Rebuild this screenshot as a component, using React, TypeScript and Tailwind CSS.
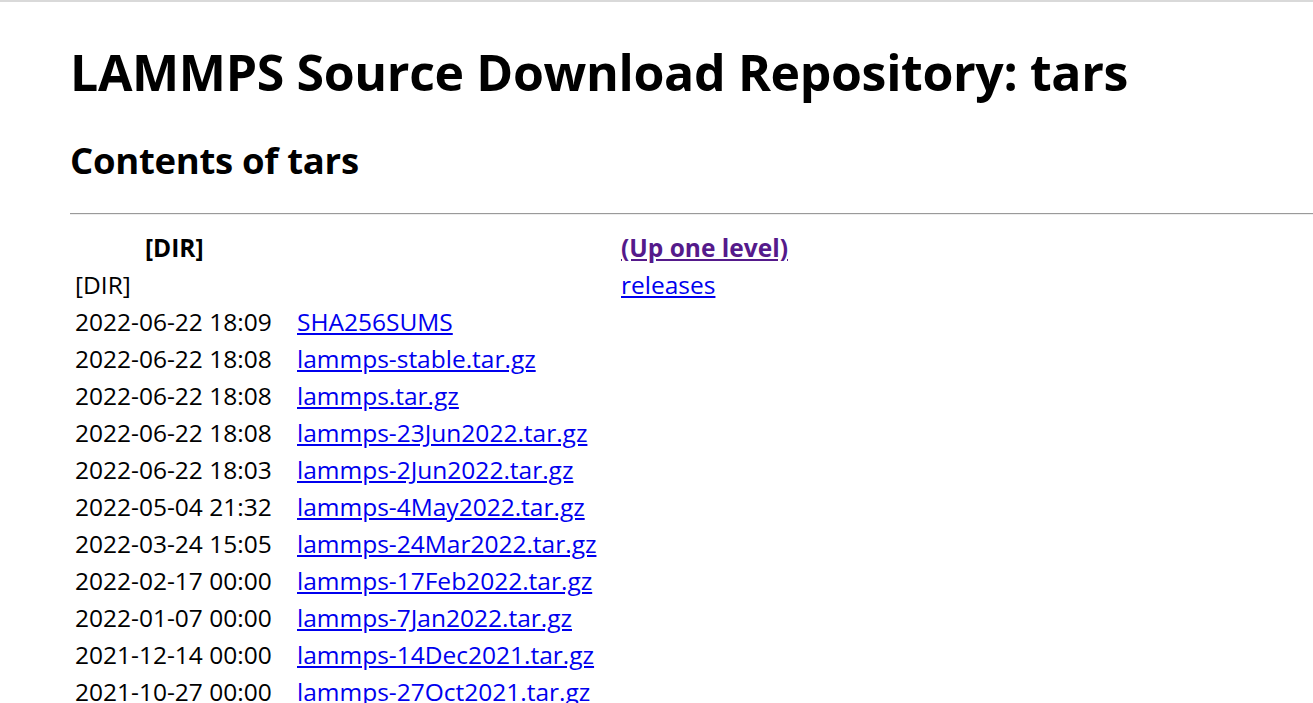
import React from "react";

const rows: [string, string][] = [
  ["2022-06-22 18:09", "SHA256SUMS"],
  ["2022-06-22 18:08", "lammps-stable.tar.gz"],
  ["2022-06-22 18:08", "lammps.tar.gz"],
  ["2022-06-22 18:08", "lammps-23Jun2022.tar.gz"],
  ["2022-06-22 18:03", "lammps-2Jun2022.tar.gz"],
  ["2022-05-04 21:32", "lammps-4May2022.tar.gz"],
  ["2022-03-24 15:05", "lammps-24Mar2022.tar.gz"],
  ["2022-02-17 00:00", "lammps-17Feb2022.tar.gz"],
  ["2022-01-07 00:00", "lammps-7Jan2022.tar.gz"],
  ["2021-12-14 00:00", "lammps-14Dec2021.tar.gz"],
  ["2021-10-27 00:00", "lammps-27Oct2021.tar.gz"],
];

export default function App() {
  return (
    <div
      className="h-[703px] overflow-hidden bg-white text-black border-t-2 border-[#d9d9d9]"
      style={{ fontFamily: '"Open Sans", "Noto Sans", sans-serif' }}
    >
      <div className="pl-[70px]">
        <h1 className="text-[50px] font-bold leading-[60px] pt-[40px] tracking-[-0.35px] whitespace-nowrap">
          LAMMPS Source Download Repository: tars
        </h1>
        <h2 className="text-[36.5px] font-bold leading-[44px] mt-[36px] tracking-[-0.3px]">
          Contents of tars
        </h2>
        <div className="mt-[31px] border-t border-[#9a9a9a] border-b border-b-[#eeeeee]" />
        <div className="grid grid-cols-[227px_324px_1fr] text-[24.5px] leading-[37px] mt-[14px]">
          <div className="h-[37px] pl-[75px] font-bold">[DIR]</div>
          <div className="h-[37px]" />
          <div className="h-[37px] font-bold">
            <a href="#" className="text-[#551a8b] underline">(Up one level)</a>
          </div>
          <div className="h-[37px] pl-[5px]">[DIR]</div>
          <div className="h-[37px]" />
          <div className="h-[37px]">
            <a href="#" className="text-[#0000ee] underline">releases</a>
          </div>
          {rows.map(([d, f]) => (
            <React.Fragment key={f}>
              <div className="h-[37px] pl-[5px] whitespace-nowrap">{d}</div>
              <div className="h-[37px] whitespace-nowrap">
                <a href="#" className="text-[#0000ee] underline">{f}</a>
              </div>
              <div className="h-[37px]" />
            </React.Fragment>
          ))}
        </div>
      </div>
    </div>
  );
}
